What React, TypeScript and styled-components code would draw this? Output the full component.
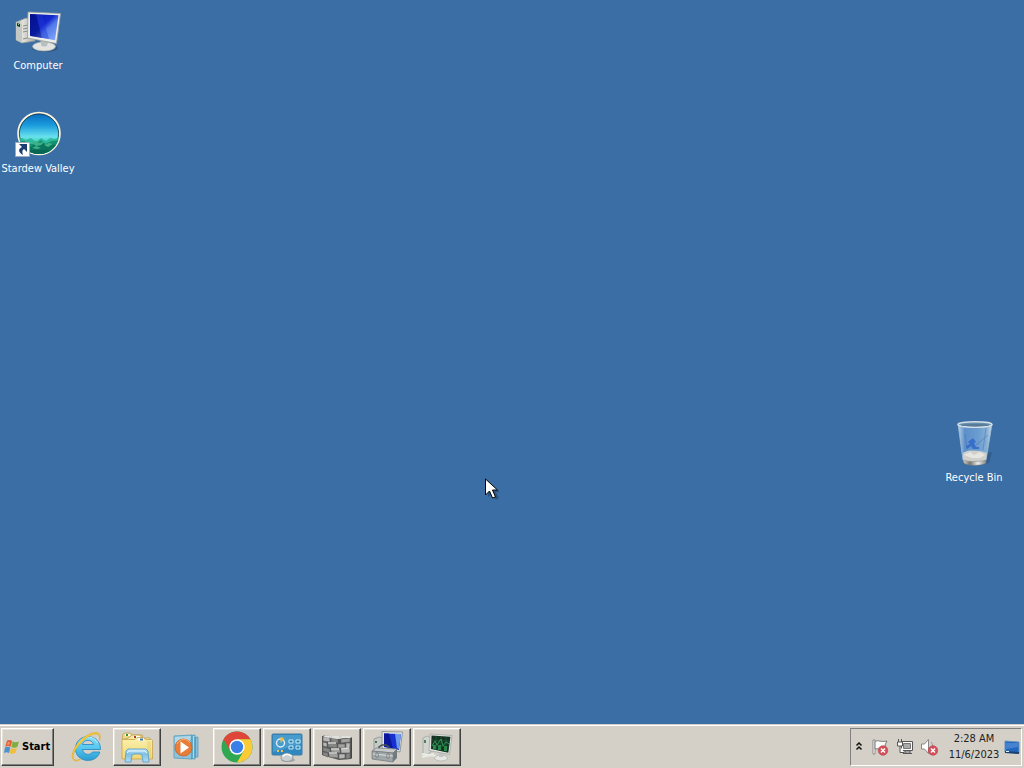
import React from "react";
import styled, { createGlobalStyle, css } from "styled-components";

const GlobalStyle = createGlobalStyle`
  * { box-sizing: border-box; }
  body {
    margin: 0;
    overflow: hidden;
    font-family: "DejaVu Sans Condensed", Tahoma, "DejaVu Sans", sans-serif;
    font-size: 11px;
    line-height: 16px;
    cursor: default;
  }
  svg { display: block; flex: none; }
`;

const Screen = styled.div`
  display: flex;
  flex-direction: column;
  height: 100vh;
`;

const Desktop = styled.main`
  position: relative;
  flex: 1;
  background: #3b6ea5;
`;

const Shortcut = styled.button<{ $top: number; $side: "left" | "right" }>`
  position: absolute;
  top: ${(p) => p.$top}px;
  ${(p) => (p.$side === "left" ? "left: 0;" : "right: 12px;")}
  display: flex;
  flex-direction: column;
  align-items: center;
  gap: 2px;
  width: 76px;
  padding: 0;
  border: 0;
  background: none;
  color: #fff;
  font: inherit;
  white-space: nowrap;
`;

const Pointer = styled.div`
  position: absolute;
  top: 478px;
  left: 485px;
`;

const raised = css`
  border: 1px solid;
  border-color: #fff #404040 #404040 #fff;
  box-shadow: inset -1px -1px 0 #808080, inset 1px 1px 0 #e4e1db;
`;

const Taskbar = styled.footer`
  display: flex;
  align-items: stretch;
  height: 44px;
  padding: 2px 2px 2px 1px;
  border-top: 1px solid #d4d0c8;
  box-shadow: inset 0 1px 0 #fff;
  background: #d4d0c8;
`;

const StartButton = styled.button`
  ${raised}
  display: flex;
  align-items: center;
  gap: 2px;
  width: 53px;
  margin-top: 1px;
  margin-right: 9px;
  padding: 0 2px;
  background: #d4d0c8;
  color: #000;
  font: inherit;
  font-weight: bold;
`;

const TaskList = styled.nav`
  display: flex;
  flex: 1;
  gap: 2px;
  margin-top: 1px;
`;

const TaskButton = styled.button<{ $running: boolean }>`
  display: flex;
  align-items: center;
  justify-content: center;
  width: 48px;
  padding: 0;
  border: 1px solid transparent;
  background: #d4d0c8;
  ${(p) => p.$running && raised}
`;

const Tray = styled.section`
  display: flex;
  align-items: center;
  width: 172px;
  margin-top: 1px;
  padding-left: 4px;
  border: 1px solid;
  border-color: #808080 #fff #fff #808080;
`;

const TrayButton = styled.button<{ $width: number }>`
  display: flex;
  justify-content: center;
  width: ${(p) => p.$width}px;
  padding: 0;
  border: 0;
  background: none;
`;

const Clock = styled.time`
  flex: 1;
  color: #222;
  text-align: center;
`;

const ClockLine = styled.span`
  display: block;
`;

const ComputerIcon = () => (
  <svg width="48" height="48" viewBox="0 0 48 48" aria-hidden="true">
    <defs>
      <linearGradient id="pcScreen" x1="0" y1="0" x2="1" y2="1">
        <stop offset="0" stopColor="#0716a4" />
        <stop offset=".45" stopColor="#1429d0" />
        <stop offset=".6" stopColor="#5279e9" />
        <stop offset="1" stopColor="#8baeff" />
      </linearGradient>
      <linearGradient id="pcCase">
        <stop offset="0" stopColor="#a5a9a6" />
        <stop offset=".35" stopColor="#e3e2dc" />
        <stop offset="1" stopColor="#a9aaa5" />
      </linearGradient>
    </defs>
    <path d="M2 14l10-4 9 3v20L8 35l-6-3z" fill="url(#pcCase)" stroke="#8b9594" strokeWidth=".7" />
    <path d="M2 14l6 2v19l-6-3z" fill="#c3c8c4" />
    <path d="M3 15l3 1v3l-3-1z" fill="#17362e" />
    <path d="M4 16h1v1H4z" fill="#5fdc68" />
    <path d="M9 18l5-1M9 21l5-1M9 24l5-1M9 31l8-2" stroke="#898f8c" />
    <ellipse cx="31" cy="40" rx="13" ry="4" fill="#284b6f" opacity=".6" />
    <path d="M26 29l10 1-1 8h-8z" fill="#c5c8c5" />
    <ellipse cx="30" cy="38.500" rx="11.500" ry="4.500" fill="#e2e4e1" stroke="#a5abad" strokeWidth=".7" />
    <path d="M27 33l7 1-1 4c-4 1-6 0-6-1z" fill="#b9bfbd" />
    <path d="M14 4L46.500 5.500l-4 30-29-5.500z" fill="#eceee9" stroke="#999f9d" strokeWidth=".8" />
    <path d="M16 6L44.500 7.300l-3.500 25-25-4.500z" fill="url(#pcScreen)" />
    <path d="M16 6l6 .3L28 30l-12-2z" fill="#000c79" opacity=".55" />
    <path d="M22 6.300l6 .3 7 24.500-7-1.300z" fill="#213ad5" opacity=".4" />
  </svg>
);

const ValleyIcon = () => (
  <svg width="48" height="48" viewBox="0 0 48 48" aria-hidden="true">
    <defs>
      <linearGradient id="sky" x1="0" y1="0" x2="0" y2="1">
        <stop offset="0" stopColor="#0866b9" />
        <stop offset=".3" stopColor="#1a9bdd" />
        <stop offset=".58" stopColor="#68e1ed" />
        <stop offset=".72" stopColor="#3ed4af" />
        <stop offset="1" stopColor="#087c62" />
      </linearGradient>
      <clipPath id="valleyDisc"><circle cx="25" cy="22.500" r="20.500" /></clipPath>
    </defs>
    <circle cx="25" cy="22.500" r="20.800" fill="url(#sky)" stroke="#f8f2df" strokeWidth="2" />
    <circle cx="25" cy="22.500" r="19.600" fill="none" stroke="#17313a" strokeWidth=".8" />
    <g clipPath="url(#valleyDisc)">
      <path d="M0 30l8-3 4 2 5-2 5 4 5-4 5 3 4-3 5 1 7-3v22H0z" fill="#27b195" opacity=".8" />
      <path d="M0 32l10-2 5 3 7 0 5-4 4 4 7-3 10-1v20H0z" fill="#129070" />
      <path d="M8 36l4-3 5 3 4-3 4 2 5-3 3 3 5-2 7 2-8 11H15z" fill="#0a755b" />
      <path d="M18 32l4-2 3 2 5-1-3 3-5 1zM30 34l5-2 4 1-5 3zM18 37l4-2 5 2-4 1z" fill="#3eb087" />
      <path d="M12 39l26 0-5 6H17z" fill="#075c50" opacity=".6" />
    </g>
    <path d="M1.500 31.500h14v14h-14z" fill="#fff" stroke="#9bacc2" />
    <path d="M5 33h8v8l-3-3c-2 1-2 3-1 6-5-3-5-6-1-8z" fill="#1c3f73" />
  </svg>
);

const RecycleIcon = () => (
  <svg width="48" height="48" viewBox="0 0 48 48" aria-hidden="true">
    <defs>
      <linearGradient id="binGlass">
        <stop offset="0" stopColor="#b9d0e6" />
        <stop offset=".2" stopColor="#5c90cb" />
        <stop offset=".6" stopColor="#6c9dd0" />
        <stop offset=".85" stopColor="#86b0d6" />
        <stop offset="1" stopColor="#c7d9e6" />
      </linearGradient>
      <linearGradient id="binBase">
        <stop offset="0" stopColor="#ddd" />
        <stop offset=".3" stopColor="#77736c" />
        <stop offset=".65" stopColor="#eee" />
        <stop offset="1" stopColor="#858986" />
      </linearGradient>
    </defs>
    <path d="M36 33l6-1-3 11-9 2z" fill="#294e76" opacity=".5" />
    <path d="M8 4l5 36c5 3 18 3 23 0l6-36z" fill="url(#binGlass)" stroke="#a5bed3" strokeWidth=".8" />
    <path d="M13 33c6-4 11-2 17-2l7 2-1 7c-6 4-18 4-23 0z" fill="#cfd0cc" />
    <path d="M14 35l6-3 4 3 6-3 5 3-5 3-8 0z" fill="#e6e5e0" />
    <path d="M13 40c5 2 18 2 23 0v3c-4 3-19 3-22 0z" fill="url(#binBase)" stroke="#86847f" strokeWidth=".5" />
    <path d="M18 22l5-4 3 4-2 1 2 4h3v2h-6l-2-3-4 3-1-3 4-2z" fill="#2862ca" opacity=".75" />
    <path d="M26 25l12-10M15 14l2 15M36 8l-3 22" stroke="#416da5" opacity=".45" />
    <ellipse cx="25" cy="4.500" rx="17" ry="2.700" fill="#688fac" stroke="#d2dfe7" strokeWidth="1.500" />
    <ellipse cx="25" cy="5.200" rx="14" ry="1.300" fill="#587b97" />
  </svg>
);

const PointerIcon = () => (
  <svg width="15" height="23" viewBox="0 0 15 23" aria-hidden="true">
    <path d="M3 5v14l4-3 4 6 3-2-3-6h4z" fill="#173554" opacity=".45" />
    <path d="M.5 1v16l4-4 3 7 3-1-3-7h5z" fill="#fff" stroke="#000" />
  </svg>
);

const WindowsIcon = () => (
  <svg width="16" height="16" viewBox="0 0 16 16" aria-hidden="true">
    <path d="M3 1.500c2-1 4-.5 5.200.5L6.700 7.700c-2-1-3.500-1-5.500 0z" fill="#de6538" />
    <path d="M8.700 2.500c2 1 4 1 6.300 0l-1.700 5.500c-2 1-4 1-6 0z" fill="#7fae43" />
    <path d="M1 8.500c2-1 3.500-1 5.300 0L5 14c-2-1-3-1-5 0z" fill="#4a92c9" />
    <path d="M7 9c2 1 4 1 6 0l-1.700 5c-2 1-3.800 1-5.700 0z" fill="#f3bc3c" />
    <path d="M4 3l2 .4-1 2-2 .3z" fill="#f79773" />
  </svg>
);

const ExplorerBrowserIcon = () => (
  <svg width="32" height="32" viewBox="0 0 32 32" aria-hidden="true">
    <defs>
      <linearGradient id="ieBlue" x1="0" y1="0" x2="0" y2="1">
        <stop stopColor="#8cdff7" /><stop offset=".5" stopColor="#52c6ee" /><stop offset="1" stopColor="#2b9bd3" />
      </linearGradient>
    </defs>
    <path fillRule="evenodd" d="M29.500 18.500H11.500c.8 5.500 7.500 6.500 10 2.500h7.300C25.500 33.500 4.500 32 4.500 17.500 4.500 2 29.500 1 29.500 18.500zM11.500 13.500h11c-1-5.500-10-5.500-11 0z" fill="url(#ieBlue)" stroke="#2d8cc4" strokeWidth=".9" />
    <path d="M7.500 13c3-9 16-9 19-1" fill="none" stroke="#c2f1ff" strokeWidth="1" />
    <path d="M28.500 9.500C30.500-2 17 3 8 14-1.500 25 1 32 9.500 28 4 33-3 28 4.500 15.500 14 1 33-4.500 28.500 9.500z" fill="#f8ce3d" stroke="#e0ae2c" strokeWidth=".7" />
  </svg>
);

const FolderIcon = () => (
  <svg width="34" height="32" viewBox="0 0 34 32" aria-hidden="true">
    <defs>
      <linearGradient id="folder" x1="0" y1="0" x2="0" y2="1">
        <stop stopColor="#fbf0ae" /><stop offset="1" stopColor="#f0d773" />
      </linearGradient>
      <linearGradient id="stand" x1="0" y1="0" x2="0" y2="1">
        <stop stopColor="#c5e6f5" /><stop offset=".4" stopColor="#7fc0e4" /><stop offset="1" stopColor="#b3dcf0" />
      </linearGradient>
    </defs>
    <path d="M2.500 8V4l2-2h6l2 2h10v4z" fill="#ecd987" stroke="#b99b4a" strokeWidth=".7" />
    <path d="M4 9l6-3 2-2h8l2 3h8v3z" fill="#f7e9a0" stroke="#b99b4a" strokeWidth=".7" />
    <path d="M5 4h5M13 6h7" stroke="#fff" strokeWidth="2" />
    <path d="M6 4h2" stroke="#30914b" strokeWidth="2" />
    <path d="M14 6h2" stroke="#b13929" strokeWidth="2" />
    <path d="M2 8.500h13l2-2h6l3 2h5.500l1 1V28H2z" fill="url(#folder)" stroke="#c6a64c" strokeWidth=".8" />
    <path d="M18 8.500h6" stroke="#fff" strokeWidth="2" />
    <path d="M20 8.500h3" stroke="#4778ad" strokeWidth="2" />
    <path d="M27 10h4v17h-4z" fill="#e6ce6e" opacity=".45" />
    <path d="M5 31l1-11 2-2h18l2 2 1 11h-6l-1-7-2-1h-6l-2 1-1 7z" fill="url(#stand)" stroke="#5ba2cd" strokeWidth=".9" />
    <path d="M7 22l2-2h16l2 2" fill="none" stroke="#e2f6ff" strokeWidth="1" />
  </svg>
);

const MediaIcon = () => (
  <svg width="32" height="32" viewBox="0 0 32 32" aria-hidden="true">
    <path d="M20 7l7-1v20l-7 0z" fill="#8abbd7" stroke="#6da4c3" />
    <path d="M16 5l8-1v24l-8-1z" fill="#b1daea" stroke="#579bbb" />
    <path d="M3 5l18-1v24L3 27z" fill="#8dc2da" stroke="#66a5c3" />
    <path d="M21 4v24M24 6v21" stroke="#3995bb" />
    <path d="M4 6l16-1-2 7-14 8z" fill="#c3e3ee" opacity=".7" />
    <circle cx="12.500" cy="16.500" r="8.500" fill="#e97c37" stroke="#c96a30" />
    <path d="M6 13c3-6 10-6 13-1" fill="none" stroke="#ffb16e" />
    <path d="M9.500 10.500v12l8.500-6z" fill="#fff" />
  </svg>
);

const ChromeIcon = () => (
  <svg width="32" height="32" viewBox="0 0 32 32" aria-hidden="true">
    <circle cx="16" cy="16" r="15.500" fill="#30a852" />
    <path d="M2.500 8.300A15.500 15.500 0 0 1 29.400 8.300H16L9.300 19.900z" fill="#df4539" />
    <path d="M29.400 8.300A15.500 15.500 0 0 1 16 31.500L22.700 19.900 16 8.300z" fill="#fbcb35" />
    <circle cx="16" cy="16" r="7.700" fill="#fff" />
    <circle cx="16" cy="16" r="6.200" fill="#397fe8" />
  </svg>
);

const ControlIcon = () => (
  <svg width="34" height="32" viewBox="0 0 34 32" aria-hidden="true">
    <rect x="2" y="3" width="30" height="21" rx="1" fill="#3187bf" stroke="#3b7ca6" />
    <path d="M3 4h28v9L3 21z" fill="#66b3dd" opacity=".45" />
    <circle cx="10.500" cy="12" r="4" fill="none" stroke="#d8edf6" strokeWidth="1.500" />
    <path d="M10.500 12V6a6 6 0 0 1 4 2z" fill="#f0bb43" />
    <path d="M19 9h4v3h-4zM26 9h4v3h-4zM19 15h4v3h-4zM26 15h4v3h-4z" fill="#267eaf" stroke="#caebf6" />
    <path d="M7 20h2M11 20h2" stroke="#f3c34d" strokeWidth="2" />
    <ellipse cx="18" cy="29" rx="7" ry="2" fill="#777" opacity=".5" />
    <ellipse cx="17" cy="26.500" rx="6" ry="4" fill="#c9cfd1" stroke="#929da1" />
    <path d="M12.500 25.500c2-3 7-3 9 0" fill="none" stroke="#fff" strokeWidth="1.500" />
  </svg>
);

const bricks = [
  "M2 6l7 1v4l-7-1z", "M10 7l7 1v4l-7-1z", "M20 8l9-1v4l-9 1z",
  "M2 11l4 1v4l-4-1z", "M7 12l9 1v4l-9-1z", "M17 13l7 0v4l-7 0z", "M25 12l4 0v5l-4 0z",
  "M2 16l7 2v4l-7-2z", "M10 18l9 0v4l-9-1z", "M20 18l9-1v5l-9 0z",
  "M2 21l5 1v4l-5-2z", "M8 22l9 1v4l-9-1z", "M18 23l6 0v4l-6 1z", "M25 23l4-1v5l-4 1z",
];

const FirewallIcon = () => (
  <svg width="32" height="32" viewBox="0 0 32 32" aria-hidden="true">
    <path d="M1 5l6-1 3 4 9 0 11-2v22l-12 1-17-5z" fill="#555654" />
    <path d="M30 6l1 1v20l-1 1z" fill="#444" />
    {bricks.map((d, i) => (
      <path key={d} d={d} fill={i % 3 === 0 ? "#b7b8b7" : i % 3 === 1 ? "#858785" : "#9fa19f"} stroke="#5e605e" strokeWidth=".6" />
    ))}
    <path d="M2 6l3-2 5 1-2 2zM10 7l2-2 6 0-1 3zM20 7l1-2 8 0 1 2z" fill="#e0e1df" />
    <path d="M7 12h8M10 18h8M8 22h8M20 18l8-1" stroke="#d7d8d5" strokeWidth="1.500" />
  </svg>
);

const ManageIcon = () => (
  <svg width="34" height="32" viewBox="0 0 34 32" aria-hidden="true">
    <path d="M4 8l5-2 4 1v12H4z" fill="#c6cac7" stroke="#999e9b" />
    <path d="M5 10h2v2H5z" fill="#3d7a53" />
    <path d="M12 0.500l20.500.5-2.500 20-18-3z" fill="#e0e4e2" stroke="#92989a" />
    <path d="M14 2.500l17 .5-2 16-15-3z" fill="#1730d0" />
    <path d="M25 3l6 0-2 15-2-1z" fill="#6f9bed" />
    <path d="M14 2.500h5l4 15-9-2z" fill="#0b169a" />
    <path d="M9 20v-4l3-2h4l3 2v4" fill="none" stroke="#4b5153" strokeWidth="1.500" />
    <path d="M2 20l4-3 21 1-4 4z" fill="#c8cac9" stroke="#777c7d" strokeWidth=".7" />
    <path d="M2 20l21 2v9L2 28z" fill="#a1a7a8" stroke="#737b7d" strokeWidth=".8" />
    <path d="M23 22l4-4v9l-4 4z" fill="#737a7d" />
    <path d="M3 23l20 2" stroke="#dce1e1" />
    <path d="M6 22h2v4H6zM17 23h2v4h-2z" fill="#eee" stroke="#60686b" strokeWidth=".8" />
  </svg>
);

const MonitorIcon = () => (
  <svg width="34" height="32" viewBox="0 0 34 32" aria-hidden="true">
    <path d="M3 7l4-2 4 2v14l-5 3-3-1z" fill="#d2d5cf" stroke="#a1a49f" strokeWidth=".8" />
    <path d="M4 9h2v3H4z" fill="#4b8165" />
    <path d="M2 23l14 2M2 26l12-3" stroke="#e9ece4" strokeWidth="2" />
    <ellipse cx="21" cy="27" rx="6.500" ry="3" fill="#e5e8e3" stroke="#b0b5b0" strokeWidth=".8" />
    <path d="M19 21h6l-2 5h-4z" fill="#c3c7c3" />
    <path d="M10 3l22 1.500-2.500 19L9 19.500z" fill="#e3e5df" stroke="#a2a7a3" strokeWidth=".8" />
    <path d="M11.500 4.500l19 1.300-2.200 16L11 18z" fill="#153322" />
    <path d="M12 9l18 1M12 14l17 2M16 5v14M21 5v15M26 6v15" stroke="#25613e" strokeWidth=".6" />
    <path d="M12 15l3-5 2 4 4-6 2 7 3-4 3 2" fill="none" stroke="#2b9954" />
    <path d="M13 14h3v4h-3zM18 14h3v5h-3zM24 15h3v5h-3z" fill="#27864a" />
  </svg>
);

const ChevronIcon = () => (
  <svg width="8" height="10" viewBox="0 0 8 10" aria-hidden="true">
    <path d="M1.500 3.500l2.500-2.500 2.500 2.500M1.500 7.500l2.500-2.500 2.500 2.500" fill="none" stroke="#111" strokeWidth="1.500" />
  </svg>
);

const ErrorMark = () => (
  <g>
    <circle cx="12" cy="12.500" r="4.800" fill="#d4505a" stroke="#b94450" strokeWidth=".6" />
    <path d="M10 10.500l4 4M14 10.500l-4 4" stroke="#fff" strokeWidth="1.500" />
  </g>
);

const FlagIcon = () => (
  <svg width="18" height="18" viewBox="0 0 18 18" aria-hidden="true">
    <path d="M2 2h2v14H2z" fill="#fff" stroke="#777" strokeWidth=".8" />
    <path d="M4 3.500c4-2 5 1 12-.5l-2 4 2 4c-5 2-7-1-12 0z" fill="#fafafa" stroke="#7a7a7a" />
    <ErrorMark />
  </svg>
);

const NetworkIcon = () => (
  <svg width="18" height="18" viewBox="0 0 18 18" aria-hidden="true">
    <path d="M5.500 3.500h11v9h-11z" fill="#fff" stroke="#555" />
    <path d="M7.500 5.500h7v5h-7z" fill="#aaa" stroke="#777" />
    <path d="M9 13h5v2H9zM7 15.500h9" fill="#eee" stroke="#555" />
    <path d="M2.500 1v3M5.500 1v3M1.500 4h5v4h-5zM4 8v6.500h4" fill="#fff" stroke="#555" />
  </svg>
);

const VolumeIcon = () => (
  <svg width="18" height="18" viewBox="0 0 18 18" aria-hidden="true">
    <path d="M1.500 6h3l4-4.500v14l-4-4.500h-3z" fill="#fff" stroke="#888" />
    <path d="M11 4c2 2 2 4 1 6" fill="none" stroke="#999" />
    <g transform="translate(1 0)"><ErrorMark /></g>
  </svg>
);

const ShowDesktopIcon = () => (
  <svg width="16" height="16" viewBox="0 0 16 16" aria-hidden="true">
    <path d="M1 2l14 1v11L1 13z" fill="#2466bc" stroke="#6795c3" />
    <path d="M2 4l12 0v4L2 10z" fill="#609ae0" opacity=".55" />
    <path d="M1 12l14 1v2L1 14z" fill="#17406f" />
    <path d="M2 12h3v1H2z" fill="#e9f2f5" />
  </svg>
);

const tasks = [
  { name: "Internet Explorer", icon: <ExplorerBrowserIcon />, running: false },
  { name: "Windows Explorer", icon: <FolderIcon />, running: true },
  { name: "Windows Media Player", icon: <MediaIcon />, running: false },
  { name: "Google Chrome", icon: <ChromeIcon />, running: true },
  { name: "Control Panel", icon: <ControlIcon />, running: true },
  { name: "Windows Firewall", icon: <FirewallIcon />, running: true },
  { name: "Computer Management", icon: <ManageIcon />, running: true },
  { name: "Resource Monitor", icon: <MonitorIcon />, running: true },
];

export default function App() {
  return (
    <Screen>
      <GlobalStyle />
      <Desktop>
        <Shortcut $top={8} $side="left"><ComputerIcon />Computer</Shortcut>
        <Shortcut $top={111} $side="left"><ValleyIcon />Stardew Valley</Shortcut>
        <Shortcut $top={420} $side="right"><RecycleIcon />Recycle Bin</Shortcut>
        <Pointer><PointerIcon /></Pointer>
      </Desktop>
      <Taskbar>
        <StartButton><WindowsIcon />Start</StartButton>
        <TaskList aria-label="Taskbar">
          {tasks.map((task) => (
            <TaskButton key={task.name} $running={task.running} aria-label={task.name}>{task.icon}</TaskButton>
          ))}
        </TaskList>
        <Tray aria-label="Notification area">
          <TrayButton $width={8} aria-label="Show hidden icons"><ChevronIcon /></TrayButton>
          <TrayButton $width={34} aria-label="Action Center"><FlagIcon /></TrayButton>
          <TrayButton $width={16} aria-label="Network"><NetworkIcon /></TrayButton>
          <TrayButton $width={32} aria-label="Volume"><VolumeIcon /></TrayButton>
          <Clock dateTime="2023-11-06T02:28">
            <ClockLine>2:28 AM</ClockLine>
            <ClockLine>11/6/2023</ClockLine>
          </Clock>
          <TrayButton $width={18} aria-label="Show desktop"><ShowDesktopIcon /></TrayButton>
        </Tray>
      </Taskbar>
    </Screen>
  );
}
